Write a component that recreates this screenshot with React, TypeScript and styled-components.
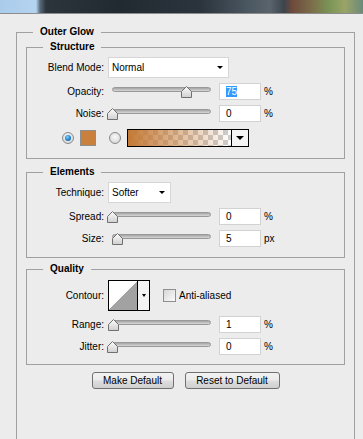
import styled, { createGlobalStyle } from 'styled-components';

const GlobalStyle = createGlobalStyle`
  html, body {
    margin: 0;
    padding: 0;
    background: #ececec;
    overflow: hidden;
  }
  body {
    font-family: 'Liberation Sans', Arial, sans-serif;
    font-size: 10px;
    color: #000;
  }
  #root {
    width: 363px;
    height: 439px;
    overflow: hidden;
  }
  * {
    box-sizing: border-box;
  }
`;

const TopStrip = styled.div`
  height: 14px;
  border-bottom: 1px solid #8c8c8c;
  background: linear-gradient(
    to right,
    #aacbea 0,
    #b4d4f0 36px,
    #5a6a7a 40px,
    #2c343c 46px,
    #222a31 120px,
    #2b343d 200px,
    #4c5862 250px,
    #5a646c 270px,
    #3c444c 284px,
    #6e4a3c 292px,
    #7a6a48 310px,
    #7c9658 330px,
    #9aa468 345px,
    #6a8a7a 363px
  );
`;

const Group = styled.fieldset<{ $top: number; $bottom: number }>`
  margin: ${(p) => p.$top}px 9px 0;
  padding: 0 0 ${(p) => p.$bottom}px;
  border: 1px solid #a0a0a0;
  min-width: 0;
`;

const OuterGroup = styled(Group)`
  margin: 11px 0 0 16px;
  width: 339px;
  height: 470px;
`;

const Legend = styled.legend`
  margin-left: 16px;
  padding: 0 7px;
  font-weight: bold;
  font-size: 10px;
  line-height: 14px;
`;

const Row = styled.div<{ $mt: number; $h: number }>`
  display: flex;
  align-items: center;
  margin-top: ${(p) => p.$mt}px;
  height: ${(p) => p.$h}px;
`;

const Label = styled.div`
  width: 77px;
  flex-shrink: 0;
  text-align: right;
  white-space: nowrap;
`;

const Select = styled.div<{ $w: number }>`
  width: ${(p) => p.$w}px;
  height: 21px;
  margin-left: 4px;
  background: #fff;
  border: 1px solid #d6d6d6;
  display: flex;
  align-items: center;
  justify-content: space-between;
  padding: 0 5px 0 3px;
`;

const DownArrow = styled.span<{ $w?: number }>`
  width: 0;
  height: 0;
  border-left: ${(p) => (p.$w ?? 6) / 2}px solid transparent;
  border-right: ${(p) => (p.$w ?? 6) / 2}px solid transparent;
  border-top: ${(p) => Math.round((p.$w ?? 6) * 0.55)}px solid #000;
`;

const SliderBox = styled.div`
  position: relative;
  width: 112px;
  height: 17px;
  margin-left: 3px;
  flex-shrink: 0;
`;

const Track = styled.div`
  margin: 4px 0 0 5px;
  width: 99px;
  height: 5px;
  border-radius: 3px;
  border: 1px solid #999;
  background: linear-gradient(#a4a4a4, #d8d8d8);
`;

const Thumb = styled.svg`
  position: absolute;
  top: 3px;
  width: 11px;
  height: 12px;
`;

const Field = styled.div`
  width: 42px;
  height: 17px;
  background: #fff;
  border: 1px solid #d2d2d2;
  padding-left: 6px;
  display: flex;
  align-items: center;
`;

const Selected = styled.span`
  background: #3399ff;
  color: #fff;
  line-height: 11px;
`;

const Unit = styled.span`
  margin-left: 3px;
`;

const Radio = styled.span<{ $on?: boolean; $ml: number }>`
  width: 12px;
  height: 12px;
  margin-left: ${(p) => p.$ml}px;
  border-radius: 50%;
  border: 1px solid #8a8a8a;
  background: radial-gradient(circle at 50% 40%, #fafafa, #cfcfcf);
  display: flex;
  align-items: center;
  justify-content: center;
  flex-shrink: 0;

  &::after {
    content: '';
    display: ${(p) => (p.$on ? 'block' : 'none')};
    width: 6px;
    height: 6px;
    border-radius: 50%;
    background: radial-gradient(circle at 40% 35%, #7fd0ff, #1a78c2 60%, #0b4f8a);
  }
`;

const Swatch = styled.span`
  width: 16px;
  height: 16px;
  margin-left: 6px;
  background: #c8803c;
  border: 1px solid #8e8e8e;
`;

const GradientPicker = styled.div`
  width: 122px;
  height: 18px;
  margin-left: 6px;
  border: 1px solid #000;
  display: flex;
`;

const GradientPreview = styled.div`
  flex: 1;
  border-right: 1px solid #000;
  background: linear-gradient(to right, #c47a36, rgba(200, 128, 60, 0)),
    repeating-conic-gradient(#cdcdcd 0 25%, #ffffff 0 50%) 0 0 / 10px 10px;
`;

const PickerButton = styled.div<{ $w: number }>`
  width: ${(p) => p.$w}px;
  background: #f4f4f4;
  display: flex;
  align-items: center;
  justify-content: center;
`;

const ContourPicker = styled.div`
  width: 42px;
  height: 31px;
  margin-left: 4px;
  border: 1px solid #000;
  display: flex;
`;

const ContourPreview = styled.div`
  width: 30px;
  border-right: 1px solid #000;
  background: linear-gradient(to bottom right, #fff 50%, #a2a2a2 50%);
`;

const Checkbox = styled.span`
  width: 13px;
  height: 13px;
  margin-left: 13px;
  border: 1px solid #8e8f8f;
  background: linear-gradient(135deg, #d6d6d6, #fbfbfb);
`;

const CheckLabel = styled.span`
  margin-left: 3px;
`;

const ButtonRow = styled.div`
  display: flex;
  justify-content: center;
  gap: 11px;
  margin-top: 7px;
`;

const Button = styled.button<{ $w: number }>`
  width: ${(p) => p.$w}px;
  height: 17px;
  padding: 0;
  font-family: 'Liberation Sans', Arial, sans-serif;
  font-size: 10px;
  color: #000;
  border: 1px solid #707070;
  border-radius: 3px;
  background: linear-gradient(#f2f2f2, #ebebeb 48%, #dddddd 52%, #cfcfcf);
`;

function Slider({ value }: { value: number }) {
  return (
    <SliderBox>
      <Track />
      <Thumb viewBox="0 0 11 12" style={{ left: `${value * 99}px` }}>
        <defs>
          <linearGradient id="thumbFill" x1="0" y1="0" x2="0" y2="1">
            <stop offset="0" stopColor="#fdfdfd" />
            <stop offset="1" stopColor="#cfcfcf" />
          </linearGradient>
        </defs>
        <polygon
          points="0.5,5.5 5.5,0.5 10.5,5.5 10.5,11.5 0.5,11.5"
          fill="url(#thumbFill)"
          stroke="#707070"
        />
      </Thumb>
    </SliderBox>
  );
}

function SliderRow(props: {
  label: string;
  value: number;
  text: string;
  unit: string;
  selected?: boolean;
}) {
  return (
    <Row $mt={5} $h={17}>
      <Label>{props.label}</Label>
      <Slider value={props.value} />
      <Field>{props.selected ? <Selected>{props.text}</Selected> : props.text}</Field>
      <Unit>{props.unit}</Unit>
    </Row>
  );
}

export default function App() {
  return (
    <>
      <GlobalStyle />
      <TopStrip />
      <OuterGroup $top={11} $bottom={0}>
        <Legend>Outer Glow</Legend>

        <Group $top={1} $bottom={11}>
          <Legend>Structure</Legend>
          <Row $mt={3} $h={21}>
            <Label>Blend Mode:</Label>
            <Select $w={121}>
              Normal
              <DownArrow />
            </Select>
          </Row>
          <SliderRow label="Opacity:" value={0.75} text="75" unit="%" selected />
          <SliderRow label="Noise:" value={0} text="0" unit="%" />
          <Row $mt={7} $h={18}>
            <Radio $on $ml={35} />
            <Swatch />
            <Radio $ml={13} />
            <GradientPicker>
              <GradientPreview />
              <PickerButton $w={16}>
                <DownArrow $w={8} />
              </PickerButton>
            </GradientPicker>
          </Row>
        </Group>

        <Group $top={6} $bottom={10}>
          <Legend>Elements</Legend>
          <Row $mt={3} $h={21}>
            <Label>Technique:</Label>
            <Select $w={63}>
              Softer
              <DownArrow />
            </Select>
          </Row>
          <SliderRow label="Spread:" value={0} text="0" unit="%" />
          <SliderRow label="Size:" value={0.05} text="5" unit="px" />
        </Group>

        <Group $top={4} $bottom={9}>
          <Legend>Quality</Legend>
          <Row $mt={4} $h={31}>
            <Label>Contour:</Label>
            <ContourPicker>
              <ContourPreview />
              <PickerButton $w={11}>
                <DownArrow $w={5} />
              </PickerButton>
            </ContourPicker>
            <Checkbox />
            <CheckLabel>Anti-aliased</CheckLabel>
          </Row>
          <SliderRow label="Range:" value={0.01} text="1" unit="%" />
          <SliderRow label="Jitter:" value={0} text="0" unit="%" />
        </Group>

        <ButtonRow>
          <Button $w={82}>Make Default</Button>
          <Button $w={95}>Reset to Default</Button>
        </ButtonRow>
      </OuterGroup>
    </>
  );
}
